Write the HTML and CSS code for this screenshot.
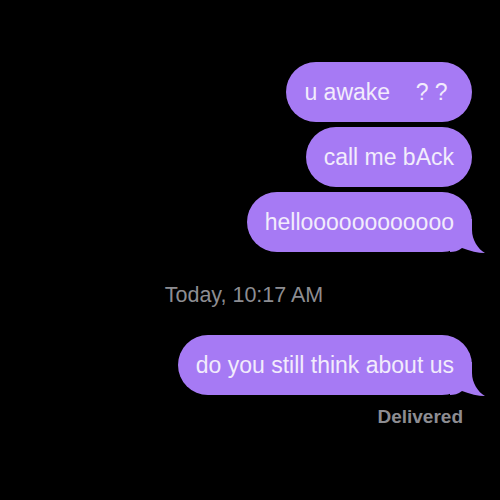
FILE: index.html
```html
<!DOCTYPE html>
<html>
<head>
<meta charset="utf-8">
<link rel="stylesheet" href="styles.css">
</head>
<body>
<div class="thread">
  <div class="bubble"><span class="txt">u awake    ? ? </span></div>
  <div class="bubble"><span class="txt">call me bAck</span></div>
  <div class="bubble"><svg class="tail" viewBox="0 0 36 34" width="36" height="34"><path d="M0,0 H22 V11 C22,21 28,30 35,34 C28,34 20,32 12,29 C8,32 4,33 0,33 Z"/></svg><span class="txt">helloooooooooooo</span></div>
  <div class="stamp">Today, 10:17 AM</div>
  <div class="bubble"><svg class="tail" viewBox="0 0 36 34" width="36" height="34"><path d="M0,0 H22 V11 C22,21 28,30 35,34 C28,34 20,32 12,29 C8,32 4,33 0,33 Z"/></svg><span class="txt">do you still think about us</span></div>
  <div class="status">Delivered</div>
</div>
</body>
</html>
```
FILE: styles.css
```css
html, body {
  margin: 0;
  background: #000;
  width: 500px;
  height: 500px;
  overflow: hidden;
}
.thread {
  display: flex;
  flex-direction: column;
  align-items: flex-end;
  padding: 62px 28px 0 0;
  font-family: "Liberation Sans", Arial, sans-serif;
}
.bubble {
  position: relative;
  background: #a67af4;
  color: #f2ecfc;
  font-size: 23px;
  line-height: 26px;
  padding: 17px 18px;
  border-radius: 30px;
  white-space: pre;
  margin-bottom: 5px;
}
.txt {
  position: relative;
  z-index: 1;
}
.tail {
  position: absolute;
  right: -14px;
  bottom: -1px;
  fill: #a67af4;
}
.stamp {
  align-self: center;
  margin: 26px 0 28px 16px;
  color: #8d8d92;
  font-size: 21.5px;
  line-height: 24px;
}
.status {
  margin: 6px 9px 0 0;
  color: #8d8d92;
  font-size: 19px;
  line-height: 22px;
  font-weight: bold;
}
```
